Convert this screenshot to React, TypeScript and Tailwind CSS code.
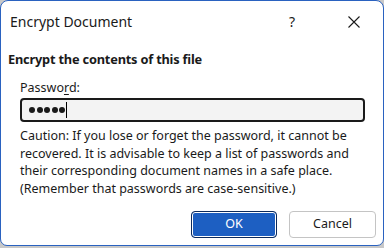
import React from "react";

export default function App() {
  return (
    <div className="w-[384px] h-[248px] bg-[#c8c8c8] overflow-hidden" style={{ fontFamily: '"Noto Sans", "Open Sans", sans-serif' }}>
      <div className="w-[384px] h-[246px] bg-white border border-[#2a62c0] rounded-t-[8px] rounded-b-[7px] flex flex-col text-[#1a1a1a]">
        <div className="flex items-center h-[40px] pl-[9px] pt-[2px]">
          <div className="text-[14px] leading-none flex-1">Encrypt Document</div>
          <div className="w-[46px] flex justify-center text-[14px] leading-none mr-[16px]">?</div>
          <div className="w-[46px] flex justify-center items-center mr-[6px]">
            <svg width="12" height="12" viewBox="0 0 12 12"><path d="M0.5 0.5 L11.5 11.5 M11.5 0.5 L0.5 11.5" stroke="#1a1a1a" strokeWidth="1.1" /></svg>
          </div>
        </div>
        <div className="pl-[7px] pt-[12px] text-[12.8px] font-bold leading-none tracking-[-0.2px]">Encrypt the contents of this file</div>
        <div className="pl-[19px] pt-[16px] text-[12.5px] leading-none">Passwo<span className="underline underline-offset-2">r</span>d:</div>
        <div className="ml-[19px] mr-[18px] mt-[4px] h-[24px] border-2 border-[#1a1a1a] rounded-[4px] bg-[#f3f3f3] flex items-center pl-[7px]">
          <div className="flex gap-[1.5px]">
            <span className="w-[6px] h-[6px] rounded-full bg-[#1a1a1a]"></span>
            <span className="w-[6px] h-[6px] rounded-full bg-[#1a1a1a]"></span>
            <span className="w-[6px] h-[6px] rounded-full bg-[#1a1a1a]"></span>
            <span className="w-[6px] h-[6px] rounded-full bg-[#1a1a1a]"></span>
            <span className="w-[6px] h-[6px] rounded-full bg-[#1a1a1a]"></span>
          </div>
          <span className="w-px h-[16px] bg-black ml-[1px]"></span>
        </div>
        <div className="pl-[19px] pr-[12px] pt-[5px] text-[12.5px] leading-[17.6px]">
          Caution: If you lose or forget the password, it cannot be recovered. It is advisable to keep a list of passwords and their corresponding document names in a safe place. (Remember that passwords are case-sensitive.)
        </div>
        <div className="flex justify-end gap-[12px] pr-[7px] mt-auto mb-[7px]">
          <button className="w-[86px] h-[27px] rounded-[4px] bg-[#1d5fc2] border border-[#0c2a5c] text-white text-[12.5px] shadow-[inset_0_0_0_1px_#ffffff]">OK</button>
          <button className="w-[87px] h-[27px] rounded-[4px] bg-white border border-[#c4c4c4] text-[#1a1a1a] text-[12.5px]">Cancel</button>
        </div>
      </div>
    </div>
  );
}
